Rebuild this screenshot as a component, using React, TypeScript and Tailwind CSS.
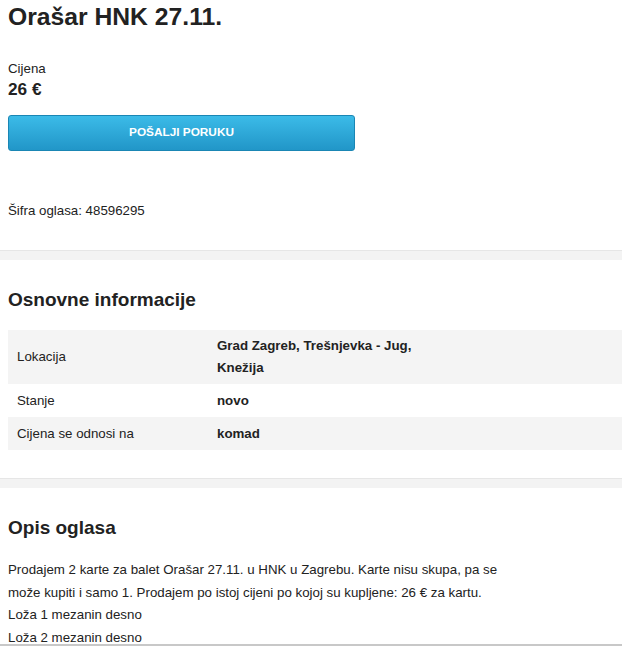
export default function App() {
  return (
    <div className="min-h-screen bg-white text-[#222] relative" style={{ fontFamily: '"Liberation Sans", Arial, sans-serif' }}>
      <div className="px-2">
        <h1 className="text-[24.7px] font-bold leading-[34px]">Orašar HNK 27.11.</h1>
        <div className="mt-[25px] text-[13.3px] leading-[20px]">Cijena</div>
        <div className="text-[17.2px] font-bold leading-[21px]">26 €</div>
        <button className="mt-[15px] w-[347px] h-[36px] rounded-[3px] border border-[#1a86b4] bg-gradient-to-b from-[#3bbbe8] to-[#2196c8] text-white text-[11.8px] font-bold">
          POŠALJI PORUKU
        </button>
        <div className="mt-[50px] text-[13.3px] leading-[20px]">Šifra oglasa: 48596295</div>
      </div>
      <div className="mt-[29px] h-[10px] border-t border-[#e6e6e6] bg-[#f3f3f3]"></div>

      <div className="pl-2">
        <h2 className="mt-[27px] text-[19px] font-bold leading-[26px]">Osnovne informacije</h2>
        <div className="mt-[17px] text-[13.3px]">
          <div className="flex bg-[#f4f4f4] h-[54px] items-center">
            <div className="w-[209px] pl-[9px]">Lokacija</div>
            <div className="font-bold leading-[22px] w-[215px]">Grad Zagreb, Trešnjevka - Jug, Knežija</div>
          </div>
          <div className="flex h-[33px] items-center">
            <div className="w-[209px] pl-[9px]">Stanje</div>
            <div className="font-bold">novo</div>
          </div>
          <div className="flex h-[33px] items-center bg-[#f4f4f4]">
            <div className="w-[209px] pl-[9px]">Cijena se odnosi na</div>
            <div className="font-bold">komad</div>
          </div>
        </div>
      </div>
      <div className="mt-[28px] h-[10px] border-t border-[#e6e6e6] bg-[#f3f3f3]"></div>

      <div className="px-2">
        <h2 className="mt-[27px] text-[19px] font-bold leading-[26px]">Opis oglasa</h2>
        <p className="mt-[18px] text-[13.3px] leading-[22.6px] w-[500px]">
          Prodajem 2 karte za balet Orašar 27.11. u HNK u Zagrebu. Karte nisu skupa, pa se može kupiti i samo 1. Prodajem po istoj cijeni po kojoj su kupljene: 26 € za kartu.
          <br />
          Loža 1 mezanin desno
          <br />
          Loža 2 mezanin desno
        </p>
      </div>
      <div className="fixed left-0 right-0 top-[644px] h-[2px] bg-[#c8c8c8]"></div>
    </div>
  );
}
